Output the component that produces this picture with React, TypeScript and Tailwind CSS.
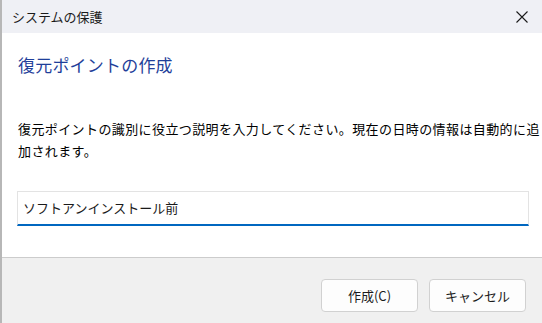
import React from 'react';

const font = { fontFamily: '"Noto Sans CJK JP", "Noto Sans", sans-serif' };

const CloseIcon = () => (
  <svg width="12" height="12" viewBox="0 0 12 12" className="text-[#1a1a1a]">
    <path d="M0.5 0.5 L11.5 11.5 M11.5 0.5 L0.5 11.5" stroke="currentColor" strokeWidth="1.1" fill="none" />
  </svg>
);

const DialogButton = ({ label }: { label: string }) => (
  <button className="w-[97px] h-[33px] rounded-[4px] border border-[#d1d1d1] bg-[#fdfdfd] text-[13px] text-[#1b1b1b] flex items-center justify-center">
    {label}
  </button>
);

const App = () => {
  return (
    <div className="w-[542px] h-[323px] flex flex-col border-l-2 border-[#b7b7b7] overflow-hidden" style={font}>
      {/* title bar */}
      <div className="h-[33px] shrink-0 bg-[#eff0f5] flex items-center justify-between pl-[10px] pr-[14px]">
        <span className="text-[13px] text-[#1a1a1a]">システムの保護</span>
        <CloseIcon />
      </div>

      {/* content */}
      <div className="flex-1 bg-white px-[16px] pt-[20px]">
        <h1 className="text-[17px] leading-[24px] text-[#1f3f9a] tracking-[0.2px]">復元ポイントの作成</h1>
        <p className="mt-[41px] text-[13px] leading-[22px] text-black whitespace-nowrap tracking-[0.4px]">
          復元ポイントの識別に役立つ説明を入力してください。現在の日時の情報は自動的に追
          <br />
          加されます。
        </p>
        <div className="mt-[29px] -ml-px w-[512px] h-[35px] border border-[#e3e3e3] border-b-2 border-b-[#0067c0] flex items-center px-[5px]">
          <span className="text-[13px] text-[#1a1a1a]">ソフトアンインストール前</span>
        </div>
      </div>

      {/* footer */}
      <div className="h-[66px] shrink-0 bg-[#f0f0f0] border-t border-[#cccccc] flex justify-end items-start pt-[21px] pr-[16px] gap-[11px]">
        <DialogButton label="作成(C)" />
        <DialogButton label="キャンセル" />
      </div>
    </div>
  );
};

export default App;
